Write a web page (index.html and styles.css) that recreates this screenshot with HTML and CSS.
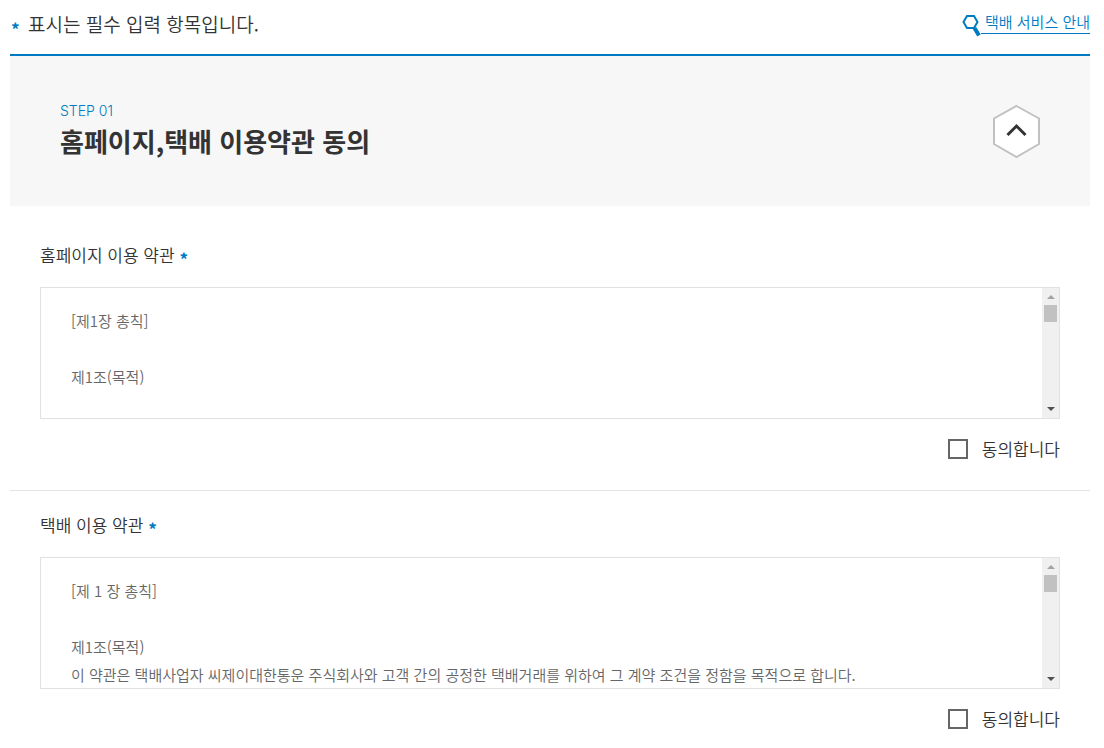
FILE: index.html
```html
<!DOCTYPE html>
<html lang="ko">
<head>
    <meta charset="UTF-8">
    <meta name="viewport" content="width=device-width, initial-scale=1.0">
    <title>이용약관 동의</title>
    <link rel="stylesheet" href="styles.css">
</head>
<body>
    <div class="container">
        <header class="top">
            <p class="notice"><span class="required">*</span> 표시는 필수 입력 항목입니다.</p>
            <a href="#" class="guide">
                <svg class="guide-icon" width="20" height="24" viewBox="0 0 20 24" aria-hidden="true">
                    <path d="M6 2h7l3.500 6-3.500 6h-7L2.500 8z" fill="none" stroke="#007bc3" stroke-width="2"/>
                    <path d="M13.500 14l4.500 7.500" stroke="#007bc3" stroke-width="4"/>
                </svg>
                <span class="guide-text">택배 서비스 안내</span>
            </a>
        </header>

        <form>
            <div class="step">
                <div>
                    <p class="step-number">STEP 01</p>
                    <h1>홈페이지,택배 이용약관 동의</h1>
                </div>
                <button type="button" class="toggle" aria-label="접기">
                    <svg width="48" height="54" viewBox="0 0 48 54">
                        <path d="M24.500 2L47 14.500v25.500L24.500 53 2 40V14.500z" fill="#fff" stroke="#c1c1c1" stroke-width="2"/>
                        <path d="M15.500 31l9-9 9 9" fill="none" stroke="#333" stroke-width="3"/>
                    </svg>
                </button>
            </div>

            <section class="agreement first">
                <h2>홈페이지 이용 약관 <span class="required">*</span></h2>
                <div class="terms">
                    <div class="terms-text" tabindex="0">
                        <p>[제1장 총칙]</p>
                        <br>
                        <p>제1조(목적)</p>
                    </div>
                    <div class="scrollbar">
                        <span class="arrow up"></span>
                        <span class="thumb"></span>
                        <span class="arrow down"></span>
                    </div>
                </div>
                <div class="agree">
                    <input type="checkbox" id="agreeHome" name="agreeHome">
                    <label for="agreeHome">동의합니다</label>
                </div>
            </section>

            <section class="agreement">
                <h2>택배 이용 약관 <span class="required">*</span></h2>
                <div class="terms">
                    <div class="terms-text" tabindex="0">
                        <p>[제 1 장 총칙]</p>
                        <br>
                        <p>제1조(목적)</p>
                        <p>이 약관은 택배사업자 씨제이대한통운 주식회사와 고객 간의 공정한 택배거래를 위하여 그 계약 조건을 정함을 목적으로 합니다.</p>
                    </div>
                    <div class="scrollbar">
                        <span class="arrow up"></span>
                        <span class="thumb"></span>
                        <span class="arrow down"></span>
                    </div>
                </div>
                <div class="agree">
                    <input type="checkbox" id="agreeParcel" name="agreeParcel">
                    <label for="agreeParcel">동의합니다</label>
                </div>
            </section>
        </form>
    </div>
</body>
</html>
```
FILE: styles.css
```css
* {
    box-sizing: border-box;
}
body {
    margin: 0;
    font-family: "Noto Sans CJK KR", sans-serif;
    font-weight: 350;
    color: #333;
    background-color: #fff;
}
h1, h2, p {
    margin: 0;
}
.container {
    margin: 0 14px 0 10px;
}
.required {
    color: #007bc3;
    font-size: 17px;
    font-weight: bold;
    line-height: 16px;
    vertical-align: -4px;
}
.top {
    display: flex;
    justify-content: space-between;
    height: 56px;
    padding-top: 10px;
    border-bottom: 2px solid #007bc3;
}
.notice {
    font-size: 19px;
    line-height: 28px;
}
.notice .required {
    padding: 0 3px 0 1px;
}
.guide {
    display: flex;
    align-items: flex-start;
    color: #007bc3;
    font-size: 15px;
    line-height: 23px;
    text-decoration: none;
}
.guide-icon {
    margin-top: 4px;
}
.guide-text {
    padding-left: 4px;
    border-bottom: 1px solid #007bc3;
}
.step {
    display: flex;
    justify-content: space-between;
    align-items: center;
    height: 150px;
    padding: 0 50px;
    background-color: #f7f7f7;
}
.step-number {
    color: #007bc3;
    font-family: Inter, sans-serif;
    font-size: 14px;
    line-height: 20px;
}
h1 {
    font-size: 26px;
    font-weight: bold;
    line-height: 40px;
}
.toggle {
    padding: 0;
    border: none;
    background: none;
    cursor: pointer;
}
.toggle svg {
    display: block;
}
.agreement {
    padding: 20px 30px 28px;
}
.first {
    padding-top: 35px;
    border-bottom: 1px solid #e3e3e3;
}
h2 {
    font-size: 17px;
    font-weight: 350;
    line-height: 28px;
    margin-bottom: 18px;
}
.terms {
    display: flex;
    height: 132px;
    border: 1px solid #e1e1e1;
}
.terms-text {
    flex: 1;
    padding: 19px 30px;
    overflow: hidden;
    color: #666;
    font-size: 15px;
    line-height: 28px;
}
.scrollbar {
    display: flex;
    flex-direction: column;
    align-items: center;
    width: 17px;
    padding: 7px 0;
    background-color: #f0f0f0;
}
.arrow {
    border-left: 4px solid transparent;
    border-right: 4px solid transparent;
}
.up {
    border-bottom: 4px solid #a3a3a3;
}
.down {
    margin-top: auto;
    border-top: 4px solid #505050;
}
.thumb {
    width: 13px;
    height: 17px;
    margin-top: 6px;
    background-color: #c1c1c1;
}
.agree {
    display: flex;
    justify-content: flex-end;
    align-items: center;
    gap: 14px;
    margin-top: 17px;
    font-size: 17px;
    line-height: 26px;
}
.agree input {
    appearance: none;
    width: 20px;
    height: 20px;
    margin: 0;
    border: 2px solid #666;
    background-color: #fff;
}
.agree input:checked {
    background-color: #007bc3;
}
```
